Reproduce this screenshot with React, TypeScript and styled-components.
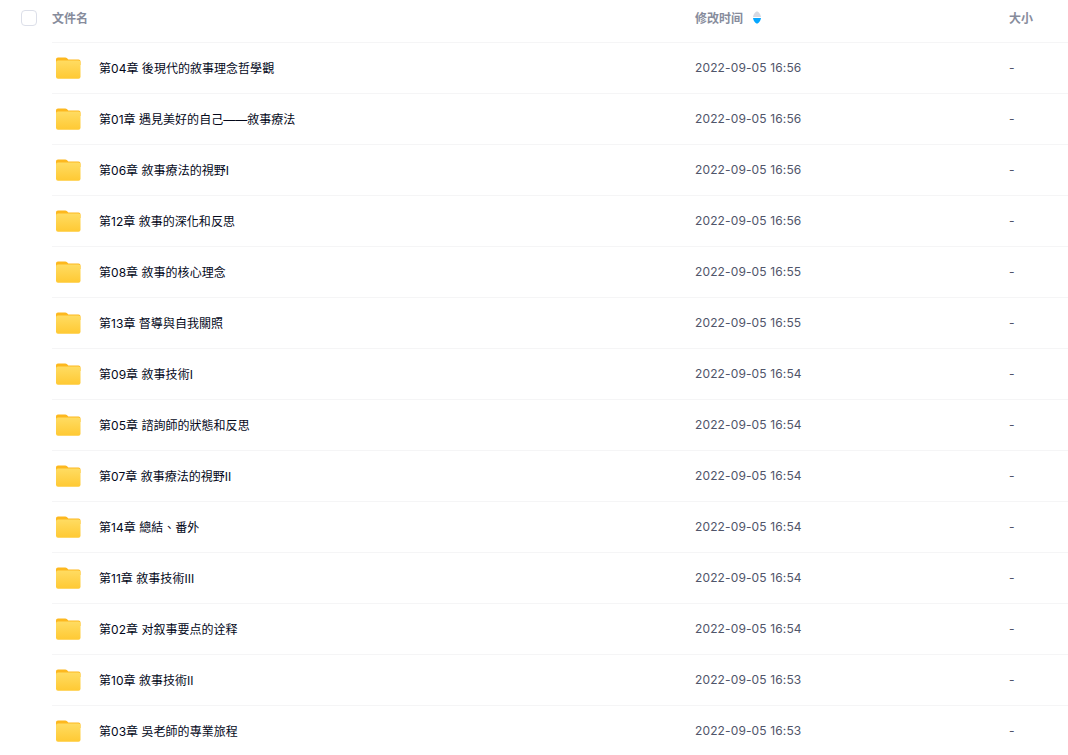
import React from 'react';
import styled, { createGlobalStyle } from 'styled-components';

const GlobalStyle = createGlobalStyle`
  html, body {
    margin: 0;
    padding: 0;
    background: #fff;
    overflow: hidden;
  }
  body {
    font-family: Inter, 'Noto Sans CJK TC', 'Noto Sans CJK SC', sans-serif;
  }
`;

const Page = styled.div`
  width: 1068px;
  height: 755px;
  overflow: hidden;
`;

const HeaderRow = styled.div`
  display: flex;
  align-items: center;
  height: 35px;
  padding-left: 21px;
`;

const CheckBox = styled.span`
  width: 14px;
  height: 14px;
  border: 1px solid #dcdfe9;
  border-radius: 4px;
  background: #fff;
  margin-right: 15px;
`;

const HeadCell = styled.div<{ $width?: number }>`
  display: flex;
  align-items: center;
  width: ${(p) => (p.$width ? `${p.$width}px` : 'auto')};
  margin-bottom: 1px;
  font-size: 12px;
  font-weight: 700;
  color: #878c9c;
  font-family: 'Noto Sans CJK SC', sans-serif;
`;

const SortIcon = styled.svg`
  margin-left: 9px;
`;

const Body = styled.div`
  margin-left: 52px;
  padding-top: 7px;
`;

const Row = styled.div`
  display: flex;
  align-items: center;
  height: 50px;
  border-top: 1px solid #f5f5f6;
`;

const NameCell = styled.div`
  display: flex;
  align-items: center;
  width: 643px;
  padding-left: 4px;
  box-sizing: border-box;
`;

const Name = styled.span`
  margin: 0 0 2px 18px;
  font-size: 12px;
  font-weight: 400;
  letter-spacing: 0.03px;
  color: #03081a;
`;

const DateCell = styled.div`
  width: 314px;
  margin-bottom: 2px;
  font-size: 12px;
  letter-spacing: 0.13px;
  color: #50556a;
`;

const SizeCell = styled.div`
  margin-bottom: 2px;
  font-size: 12px;
  color: #50556a;
`;

const FolderIcon = () => (
  <svg width="25" height="22" viewBox="0 0 25 22">
    <defs>
      <linearGradient id="folderFront" x1="0" y1="0" x2="0" y2="1">
        <stop offset="0" stopColor="#ffdc62" />
        <stop offset="1" stopColor="#ffc933" />
      </linearGradient>
    </defs>
    <path
      d="M2 0.5h7.2c.8 0 1.4.3 1.9.8l1.2 1.2H22.5c1.2 0 2 .8 2 2V8H0V2.5C0 1.3.8.5 2 .5z"
      fill="#fdb81e"
    />
    <rect x="0" y="3.4" width="24.5" height="18.4" rx="2" fill="url(#folderFront)" />
  </svg>
);

const SortArrows = () => (
  <SortIcon width="10" height="13" viewBox="0 0 10 13">
    <path d="M1 6C1.4 3.2 3.4.5 5 .5S8.6 3.2 9 6z" fill="#d6d9e2" />
    <path d="M1 7C1.4 9.8 3.4 12.5 5 12.5S8.6 9.8 9 7z" fill="#06a7ff" />
  </SortIcon>
);

const files = [
  ['第04章 後現代的敘事理念哲學觀', '2022-09-05 16:56'],
  ['第01章 遇見美好的自己——敘事療法', '2022-09-05 16:56'],
  ['第06章 敘事療法的視野I', '2022-09-05 16:56'],
  ['第12章 敘事的深化和反思', '2022-09-05 16:56'],
  ['第08章 敘事的核心理念', '2022-09-05 16:55'],
  ['第13章 督導與自我關照', '2022-09-05 16:55'],
  ['第09章 敘事技術I', '2022-09-05 16:54'],
  ['第05章 諮詢師的狀態和反思', '2022-09-05 16:54'],
  ['第07章 敘事療法的視野II', '2022-09-05 16:54'],
  ['第14章 總結、番外', '2022-09-05 16:54'],
  ['第11章 敘事技術III', '2022-09-05 16:54'],
  ['第02章 对叙事要点的诠释', '2022-09-05 16:54'],
  ['第10章 敘事技術II', '2022-09-05 16:53'],
  ['第03章 吳老師的專業旅程', '2022-09-05 16:53'],
];

const App: React.FC = () => {
  return (
    <Page>
      <GlobalStyle />
      <HeaderRow>
        <CheckBox />
        <HeadCell $width={643}>文件名</HeadCell>
        <HeadCell $width={314}>
          修改时间
          <SortArrows />
        </HeadCell>
        <HeadCell>大小</HeadCell>
      </HeaderRow>
      <Body>
        {files.map(([name, date]) => (
          <Row key={name}>
            <NameCell>
              <FolderIcon />
              <Name>{name}</Name>
            </NameCell>
            <DateCell>{date}</DateCell>
            <SizeCell>-</SizeCell>
          </Row>
        ))}
      </Body>
    </Page>
  );
};

export default App;
